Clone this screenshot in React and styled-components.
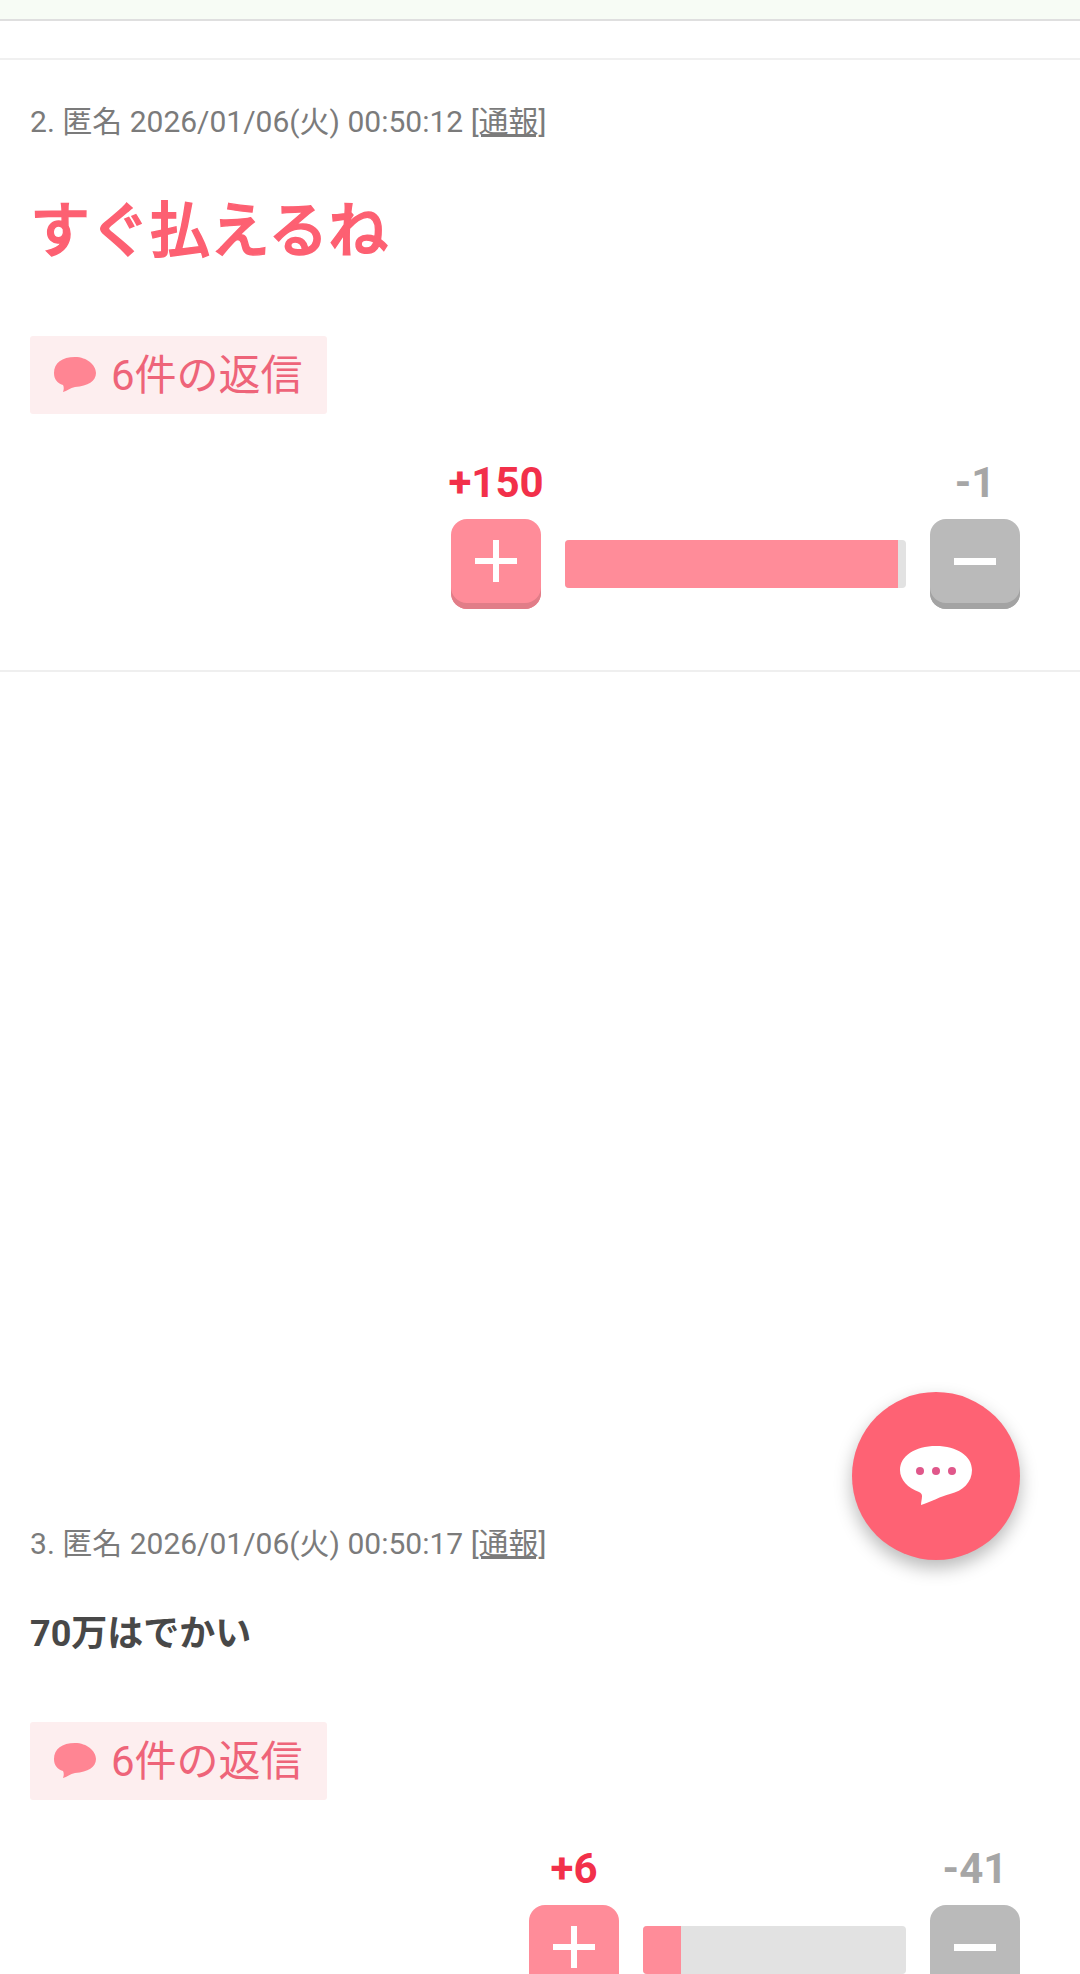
import styled, { createGlobalStyle } from "styled-components";

const posts = [
  {
    id: 2,
    time: "2026/01/06(火) 00:50:12",
    text: "すぐ払えるね",
    big: true,
    up: 150,
    down: 1,
    barWidth: 341,
    fill: 97.8,
  },
  {
    id: 3,
    time: "2026/01/06(火) 00:50:17",
    text: "70万はでかい",
    big: false,
    up: 6,
    down: 41,
    barWidth: 263,
    fill: 14.5,
  },
];

const BubbleIcon = () => (
  <svg width="44" height="38" viewBox="0 0 44 38">
    <path
      d="M22 1C9 1 1 7 1 17c0 6 3 10 9 12 1 2 1 4 0 7 4-1 7-4 12-5 13-1 21-6 21-14S34 1 22 1z"
      fill="#ff8593"
    />
  </svg>
);

const FabIcon = () => (
  <svg width="74" height="62" viewBox="0 0 74 62">
    <path
      d="M37 1C16 1 1 11 1 25c0 10 8 18 19 22 2 1 3 2 3 4 0 3-1 6-1 9 10-3 20-9 29-11 13-3 22-12 22-24C73 11 58 1 37 1z"
      fill="#fff"
    />
    <circle cx="21" cy="26" r="4" fill="#e0578a" />
    <circle cx="37" cy="26" r="4" fill="#e0578a" />
    <circle cx="53" cy="26" r="4" fill="#e0578a" />
  </svg>
);

export default function App() {
  return (
    <Page>
      <GlobalStyle />
      <TopStrip />
      <Gap />
      {posts.map((post) => (
        <Post key={post.id} $last={post.id === 3}>
          <Meta>
            {post.id}. 匿名 {post.time} <Report>[通報]</Report>
          </Meta>
          <Body $big={post.big}>{post.text}</Body>
          <Replies $big={post.big}>
            <BubbleIcon />
            <RepliesLabel>6件の返信</RepliesLabel>
          </Replies>
          <Votes>
            <VoteColumn>
              <Count $up>+{post.up}</Count>
              <VoteButton $up>
                <PlusMark />
              </VoteButton>
            </VoteColumn>
            <Bar $width={post.barWidth}>
              <BarFill style={{ width: `${post.fill}%` }} />
            </Bar>
            <VoteColumn>
              <Count>-{post.down}</Count>
              <VoteButton>
                <MinusMark />
              </VoteButton>
            </VoteColumn>
          </Votes>
        </Post>
      ))}
      <Fab>
        <FabIcon />
      </Fab>
    </Page>
  );
}

const GlobalStyle = createGlobalStyle`
  html, body {
    margin: 0;
    height: 100%;
    overflow: hidden;
    background: #fff;
  }
  body {
    font-family: Roboto, "Noto Sans CJK JP", sans-serif;
  }
`;

const Page = styled.div`
  width: 1080px;
  height: 1974px;
  overflow: hidden;
`;
const TopStrip = styled.div`
  height: 19px;
  background: #f7fcf5;
  border-bottom: 2px solid #dfdfdf;
`;
const Gap = styled.div`
  height: 37px;
  border-bottom: 2px solid #f0f0f0;
`;
const Post = styled.div`
  padding: ${(p) => (p.$last ? "0 60px 0 30px" : "43px 60px 61px 30px")};
  border-bottom: ${(p) => (p.$last ? "none" : "2px solid #efefef")};
  margin-top: ${(p) => (p.$last ? "853px" : "0")};
`;
const Meta = styled.div`
  font-size: 30px;
  line-height: 38px;
  color: #7b7b7b;
`;
const Report = styled.span`
  text-decoration: underline;
`;
const Body = styled.div`
  margin-top: ${(p) => (p.$big ? "53px" : "47px")};
  font-size: ${(p) => (p.$big ? "60px" : "36px")};
  line-height: ${(p) => (p.$big ? "76px" : "48px")};
  font-weight: ${(p) => (p.$big ? 500 : 700)};
  -webkit-text-stroke: ${(p) => (p.$big ? "1.4px" : "0")};
  color: ${(p) => (p.$big ? "#fd6072" : "#484848")};
`;
const Replies = styled.div`
  display: inline-flex;
  align-items: center;
  gap: 15px;
  margin-top: ${(p) => (p.$big ? "66px" : "64px")};
  height: 78px;
  width: 297px;
  box-sizing: border-box;
  padding-left: 23px;
  background: #fdeeef;
  border-radius: 3px;
  font-size: 42px;
  color: #ee6479;
`;
const RepliesLabel = styled.span`
  margin-left: -1px;
  padding-bottom: 7px;
`;
const Votes = styled.div`
  display: flex;
  justify-content: flex-end;
  align-items: flex-end;
  gap: 24px;
  margin-top: 45px;
`;
const VoteColumn = styled.div`
  display: flex;
  flex-direction: column;
  align-items: center;
  width: 90px;
`;
const Count = styled.div`
  font-size: 42px;
  line-height: 48px;
  font-weight: 700;
  white-space: nowrap;
  margin-bottom: 12px;
  color: ${(p) => (p.$up ? "#f2304a" : "#a6a6a6")};
`;
const VoteButton = styled.div`
  position: relative;
  width: 90px;
  height: 90px;
  box-sizing: border-box;
  padding-bottom: 6px;
  display: flex;
  align-items: center;
  justify-content: center;
  border-radius: 16px;
  background: ${(p) => (p.$up ? "#ff8c99" : "#bababa")};
  box-shadow: inset 0 -6px 0 ${(p) => (p.$up ? "#e17d88" : "#a3a3a3")};
`;
const MinusMark = styled.div`
  width: 42px;
  height: 7px;
  background: #fff;
`;
const PlusMark = styled(MinusMark)`
  position: relative;
  height: 6px;
  &::after {
    content: "";
    position: absolute;
    left: 18px;
    top: -18px;
    width: 6px;
    height: 42px;
    background: #fff;
  }
`;
const Bar = styled.div`
  width: ${(p) => p.$width}px;
  height: 48px;
  margin-bottom: 21px;
  border-radius: 4px;
  overflow: hidden;
  background: #e2e2e2;
`;
const BarFill = styled.div`
  height: 100%;
  background: #ff8c99;
`;
const Fab = styled.div`
  position: fixed;
  left: 852px;
  top: 1392px;
  width: 168px;
  height: 168px;
  display: flex;
  align-items: center;
  justify-content: center;
  border-radius: 50%;
  background: #fe6274;
  box-shadow: 0 8px 18px rgba(0, 0, 0, 0.28);
`;
